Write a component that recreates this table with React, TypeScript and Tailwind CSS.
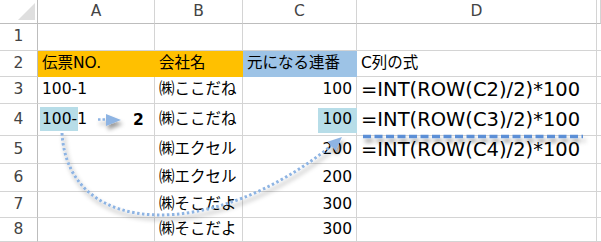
import type { ReactNode } from "react";

type Cell = {
  text?: ReactNode;
  align?: "left" | "right";
  fill?: string;
  big?: boolean;
};

const FONT = "font-['DejaVu_Sans','Noto_Sans_CJK_JP',sans-serif]";

const columns = ["A", "B", "C", "D", ""];

const rows: Cell[][] = [
  [{}, {}, {}, {}],
  [
    { text: "伝票NO.", fill: "bg-[#ffc000] border-transparent" },
    { text: "会社名", fill: "bg-[#ffc000] border-transparent" },
    { text: "元になる連番", fill: "bg-[#9dc3e6] border-transparent" },
    { text: "C列の式" },
  ],
  [
    { text: "100-1" },
    { text: "㈱ここだね" },
    { text: "100", align: "right" },
    { text: "=INT(ROW(C2)/2)*100", big: true },
  ],
  [
    { text: "100-1" },
    { text: "㈱ここだね" },
    { text: "100", align: "right" },
    { text: "=INT(ROW(C3)/2)*100", big: true },
  ],
  [{}, { text: "㈱エクセル" }, { text: "200", align: "right" }, { text: "=INT(ROW(C4)/2)*100", big: true }],
  [{}, { text: "㈱エクセル" }, { text: "200", align: "right" }, {}],
  [{}, { text: "㈱そこだよ" }, { text: "300", align: "right" }, {}],
  [{}, { text: "㈱そこだよ" }, { text: "300", align: "right" }, {}],
];

function HeaderCorner() {
  return (
    <div className="relative border-r border-b border-[#bdbdbd] bg-white">
      <svg className="absolute left-[18px] top-[3px]" width="17" height="17" viewBox="0 0 17 17">
        <polygon points="17,0 17,17 0,17" fill="#dfdfdf" />
      </svg>
    </div>
  );
}

function Annotations() {
  return (
    <svg
      className="pointer-events-none absolute inset-0"
      width="601"
      height="242"
      viewBox="0 0 601 242"
    >
      <defs>
        <filter id="soft" filterUnits="userSpaceOnUse" x="0" y="0" width="601" height="242">
          <feDropShadow dx="2" dy="4" stdDeviation="2" floodColor="#000" floodOpacity="0.4" />
        </filter>
      </defs>

      {/* A4 -> "2" */}
      <g filter="url(#soft)">
        <line x1="98" y1="119.5" x2="105" y2="119.5" stroke="#8eb4e3" strokeWidth="2.5" strokeDasharray="2.5 2" />
        <polygon points="106,114 121,120 106,126" fill="#8eb4e3" />
      </g>

      {/* A4 -> C4 curve */}
      <g filter="url(#soft)">
        <path
          d="M 62 133 C 68 240, 215 240, 331 146"
          fill="none"
          stroke="#8eb4e3"
          strokeWidth="3"
          strokeDasharray="2.5 2.5"
        />
        <polygon points="342,137 335.5,150.7 327.5,141.7" fill="#8eb4e3" />
      </g>

      {/* dashed marker under D4 */}
      <g filter="url(#soft)">
        <line x1="363" y1="136.5" x2="583" y2="136.5" stroke="#5b8fd6" strokeWidth="3.5" strokeDasharray="8 3.5" />
      </g>
    </svg>
  );
}

export default function App() {
  return (
    <div className={`relative h-[242px] w-[601px] overflow-hidden bg-white ${FONT} text-[15.5px] text-black`}>
      <div className="grid grid-cols-[38px_117px_88px_114px_240px_4px] grid-rows-[24px_27px_26px_27px_32px_28px_28px_26px_24px]">
        <HeaderCorner />
        {columns.map((c, i) => (
          <div
            key={i}
            className="flex items-center justify-center border-r border-b border-r-[#d4d4d4] border-b-[#bdbdbd] text-[#444]"
          >
            {c}
          </div>
        ))}

        {rows.map((row, r) => (
          <RowCells key={r} index={r + 1} row={row} />
        ))}
      </div>
      <Annotations />
    </div>
  );
}

function RowCells({ index, row }: { index: number; row: Cell[] }) {
  return (
    <>
      <div className="flex items-center justify-center border-r border-b border-r-[#bdbdbd] border-b-[#d4d4d4] text-[#444]">
        {index}
      </div>
      {row.map((cell, c) => (
        <div
          key={c}
          className={`relative flex items-center whitespace-nowrap border-r border-b border-[#d4d4d4] px-[4px] ${
            cell.align === "right" ? "justify-end" : "justify-start"
          } ${cell.fill ?? ""} ${cell.big ? "text-[19.5px]" : ""}`}
        >
          {index === 4 && c === 0 && (
            <>
              <div className="absolute left-[2px] top-[3px] h-[24px] w-[38px] bg-[#b7dde8]" />
              <span className="absolute left-[95px] top-[5px] font-semibold">2</span>
            </>
          )}
          {index === 4 && c === 2 && (
            <div className="absolute right-[-1px] top-[4px] h-[25px] w-[39px] bg-[#b7dde8]" />
          )}
          <span className="relative">{cell.text}</span>
        </div>
      ))}
      <div className="border-b border-[#d4d4d4]" />
    </>
  );
}
